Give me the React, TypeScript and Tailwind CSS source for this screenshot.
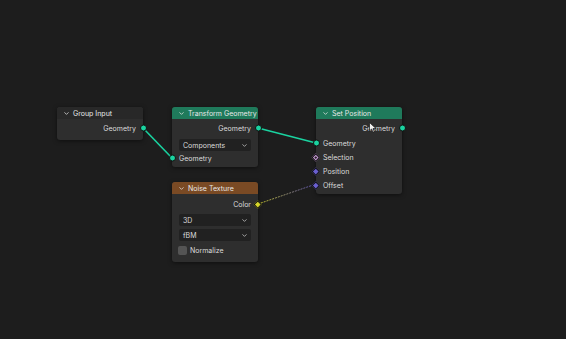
import React from 'react';
import { ChevronDown } from 'lucide-react';

type SocketKind = 'geo' | 'bool' | 'vec' | 'color';

const Socket: React.FC<{ kind: SocketKind; side: 'left' | 'right' }> = ({ kind, side }) => {
  const pos = side === 'left' ? 'left-[-3.5px]' : 'right-[-3.5px]';
  if (kind === 'geo') {
    return <span className={`absolute ${pos} top-1/2 -translate-y-1/2 w-[7px] h-[7px] rounded-full bg-[#1ad3a0] border border-[#111]`} />;
  }
  const fill = kind === 'bool' ? 'bg-[#c89ad6]' : kind === 'vec' ? 'bg-[#6a5fd0]' : 'bg-[#d6d62a]';
  return (
    <span className={`absolute ${pos} top-1/2 -translate-y-1/2 w-[7px] h-[7px] flex items-center justify-center`}>
      <span className={`w-[5.5px] h-[5.5px] rotate-45 ${fill} border border-[#111] flex items-center justify-center`}>
        {kind === 'bool' && <span className="w-[1.5px] h-[1.5px] bg-[#222]" />}
      </span>
    </span>
  );
};

const Row: React.FC<{ label: string; align: 'in' | 'out'; kind?: SocketKind }> = ({ label, align, kind }) => (
  <div className={`relative h-[14px] flex items-center px-[7px] ${align === 'out' ? 'justify-end' : 'justify-start'}`}>
    <span>{label}</span>
    {kind && <Socket kind={kind} side={align === 'out' ? 'right' : 'left'} />}
  </div>
);

const Dropdown: React.FC<{ label: string; mt?: string }> = ({ label, mt = 'mt-[3px]' }) => (
  <div className={`mx-[7px] ${mt} h-[12px] rounded-[2px] bg-[#212121] flex items-center justify-between pl-[4px] pr-[3px]`}>
    <span>{label}</span>
    <ChevronDown size={7} strokeWidth={2.5} className="text-[#cfcfcf]" />
  </div>
);

const Header: React.FC<{ title: string; color: string }> = ({ title, color }) => (
  <div className={`h-[12px] ${color} rounded-t-[3px] flex items-center gap-[3px] pl-[6px] text-[#e8e8e8]`}>
    <ChevronDown size={7} strokeWidth={2.5} />
    <span>{title}</span>
  </div>
);

export default function App() {
  return (
    <div
      className="relative w-[566px] h-[339px] overflow-hidden bg-[#1d1d1d] text-[7px] leading-none text-[#dcdcdc]"
      style={{ fontFamily: 'Inter, "Noto Sans", sans-serif' }}
    >
      {/* wires */}
      <svg className="absolute inset-0" width="566" height="339">
        <defs>
          <linearGradient id="cw" x1="258" y1="204" x2="316" y2="184" gradientUnits="userSpaceOnUse">
            <stop offset="0" stopColor="#c9c92a" />
            <stop offset="1" stopColor="#5b4fc0" />
          </linearGradient>
        </defs>
        <line x1="143" y1="128" x2="172" y2="158" stroke="#1ad3a0" strokeWidth="1.6" />
        <line x1="258" y1="128" x2="316" y2="143" stroke="#1ad3a0" strokeWidth="1.6" />
        <line x1="258" y1="204" x2="316" y2="184" stroke="url(#cw)" strokeWidth="0.9" strokeDasharray="2 1" />
      </svg>

      {/* Group Input */}
      <div className="absolute left-[57px] top-[107px] w-[86px] rounded-[3px] bg-[#2e2e2e] shadow-[0_1px_4px_rgba(0,0,0,0.5)]">
        <Header title="Group Input" color="bg-[#282828]" />
        <div className="pt-[2px] pb-[5px]">
          <Row label="Geometry" align="out" kind="geo" />
        </div>
      </div>

      {/* Transform Geometry */}
      <div className="absolute left-[172px] top-[107px] w-[86px] rounded-[3px] bg-[#2e2e2e] shadow-[0_1px_4px_rgba(0,0,0,0.5)]">
        <Header title="Transform Geometry" color="bg-[#1f7a5b]" />
        <div className="pt-[2px] pb-[2px]">
          <Row label="Geometry" align="out" kind="geo" />
          <Dropdown label="Components" mt="mt-[4px]" />
          <Row label="Geometry" align="in" kind="geo" />
        </div>
      </div>

      {/* Noise Texture */}
      <div className="absolute left-[172px] top-[182px] w-[86px] rounded-[3px] bg-[#2e2e2e] shadow-[0_1px_4px_rgba(0,0,0,0.5)]">
        <Header title="Noise Texture" color="bg-[#7a4a24]" />
        <div className="pt-[3px] pb-[5px]">
          <Row label="Color" align="out" kind="color" />
          <Dropdown label="3D" />
          <Dropdown label="fBM" />
          <div className="h-[14px] mt-[2px] flex items-center gap-[3px] px-[6px]">
            <span className="w-[9px] h-[9px] rounded-[2px] bg-[#545454]" />
            <span>Normalize</span>
          </div>
        </div>
      </div>

      {/* Set Position */}
      <div className="absolute left-[316px] top-[107px] w-[86px] rounded-[3px] bg-[#2e2e2e] shadow-[0_1px_4px_rgba(0,0,0,0.5)]">
        <Header title="Set Position" color="bg-[#1f7a5b]" />
        <div className="pt-[2px] pb-[2px]">
          <Row label="Geometry" align="out" kind="geo" />
          <div className="h-[1px]" />
          <Row label="Geometry" align="in" kind="geo" />
          <Row label="Selection" align="in" kind="bool" />
          <Row label="Position" align="in" kind="vec" />
          <Row label="Offset" align="in" kind="vec" />
        </div>
      </div>

      {/* mouse cursor */}
      <svg className="absolute left-[369px] top-[122px]" width="8" height="11" viewBox="0 0 8 11">
        <path d="M0.5 0.5 L0.5 9 L2.6 7 L4 10.3 L5.3 9.7 L4 6.6 L7 6.6 Z" fill="#f0f0f0" stroke="#111" strokeWidth="0.7" />
      </svg>
    </div>
  );
}
